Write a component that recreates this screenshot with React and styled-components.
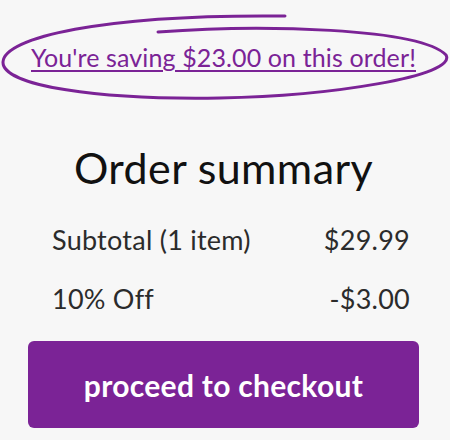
import React from 'react';
import styled, {createGlobalStyle} from 'styled-components';

const GlobalStyle = createGlobalStyle`
  html, body {
    margin: 0;
    padding: 0;
    background: #f7f7f7;
  }
  body {
    font-family: Lato, "Noto Sans", sans-serif;
  }
`;

const purple = '#7b2396';

const Root = styled.div`
  width: 450px;
  height: 440px;
  box-sizing: border-box;
  padding: 0 31px 0 28px;
  display: flex;
  flex-direction: column;
  background: #f7f7f7;
`;

const SavingsWrap = styled.div`
  position: relative;
  padding-top: 42px;
  display: flex;
  justify-content: center;
`;

const SavingsLink = styled.a`
  position: relative;
  display: block;
  font-size: 25px;
  line-height: 30px;
  letter-spacing: 0.12px;
  color: ${purple};
  text-decoration: underline;
  text-underline-offset: 3px;
  text-decoration-thickness: 2px;
  white-space: nowrap;
`;

const Scribble = styled.svg`
  position: absolute;
  left: -28px;
  top: 0;
  width: 450px;
  height: 110px;
  pointer-events: none;
`;

const Title = styled.h2`
  margin: 71px 0 0;
  font-size: 43px;
  line-height: 50px;
  font-weight: 400;
  color: #111;
  text-align: center;
  letter-spacing: 0.4px;
`;

const Rows = styled.div`
  display: flex;
  flex-direction: column;
  gap: 27px;
  margin: 31px 0 0;
  padding: 0 9px 0 24px;
`;

const Row = styled.div`
  display: flex;
  justify-content: space-between;
  font-size: 27px;
  line-height: 32px;
  letter-spacing: 0.25px;
  color: #2b2b2b;
`;

const CheckoutButton = styled.button`
  margin-top: 26px;
  height: 87px;
  border: none;
  border-radius: 6px;
  background: ${purple};
  color: #fff;
  font-family: inherit;
  font-size: 30px;
  font-weight: 700;
  letter-spacing: 0.3px;
  cursor: pointer;
`;

const App = () => (
  <>
    <GlobalStyle />
    <Root>
      <SavingsWrap>
        <Scribble viewBox="0 0 450 110">
          <path
            d="M158 32 C 260 24, 420 28, 446 55 C 458 76, 330 96, 220 98 C 100 100, 2 86, 3 62 C 4 38, 100 14, 285 16"
            fill="none"
            stroke={purple}
            strokeWidth="3"
            strokeLinecap="round"
          />
        </Scribble>
        <SavingsLink href="#">You're saving $23.00 on this order!</SavingsLink>
      </SavingsWrap>
      <Title>Order summary</Title>
      <Rows>
        <Row>
          <span>Subtotal (1 item)</span>
          <span>$29.99</span>
        </Row>
        <Row>
          <span>10% Off</span>
          <span>-$3.00</span>
        </Row>
      </Rows>
      <CheckoutButton>proceed to checkout</CheckoutButton>
    </Root>
  </>
);

export default App;
